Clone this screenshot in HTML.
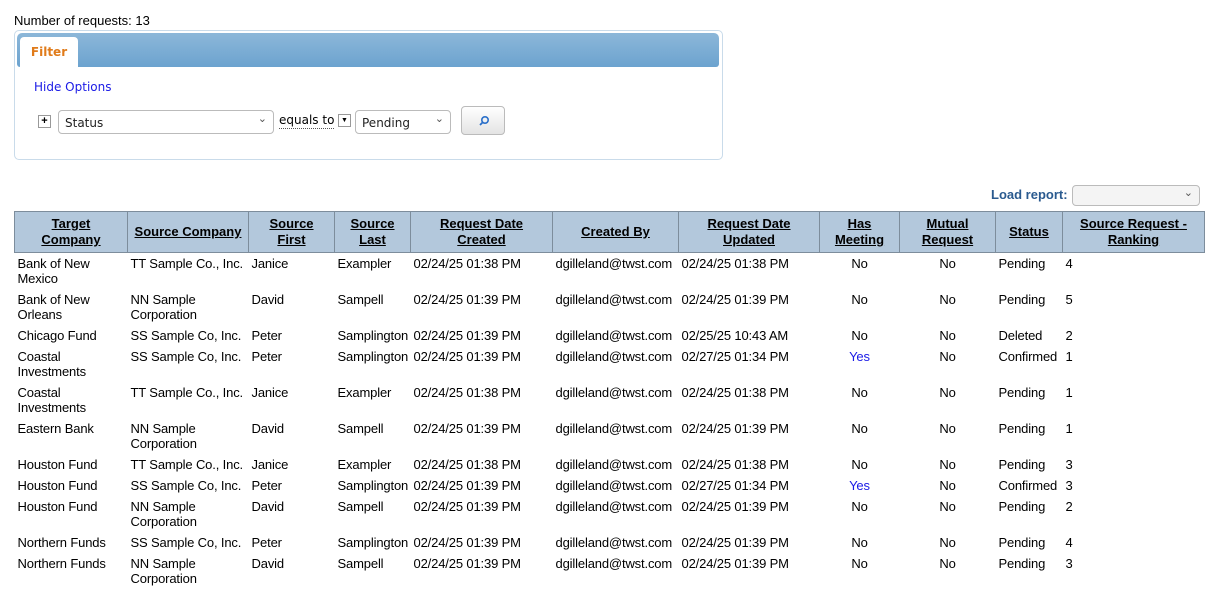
<!DOCTYPE html>
<html><head><style>
body{margin:0;background:#fff;font-family:"Liberation Sans",Arial,sans-serif;font-size:13px;color:#000;position:relative;width:1220px;height:588px;overflow:hidden}
.abs{position:absolute}
.fbox{left:14px;top:30px;width:707px;height:128px;border:1px solid #c9dbea;border-radius:5px}
.band{left:17px;top:33px;width:702px;height:34px;border-radius:5px 5px 3px 3px;background:linear-gradient(#8cb7d9,#6ca3cf);}
.tab{left:20px;top:37px;width:58px;height:30px;background:#fff;border-radius:4px 4px 0 0;color:#e07b1a;font-weight:bold;font-family:"DejaVu Sans",sans-serif;font-size:12px;text-align:center;line-height:31px}
.sel{border:1px solid #bbb;border-radius:4px;background:#fff;height:22px;font-family:"DejaVu Sans",sans-serif;font-size:12px;line-height:22px;padding-left:6px;box-sizing:border-box;color:#222}
.sel:after{content:"⌄";position:absolute;right:6px;top:-4px;font-size:11px;color:#555}
table{position:absolute;left:14px;top:211px;border-collapse:collapse;width:1190px;table-layout:fixed}
th{background:#b3c8dc;border:1px solid #7d8d9c;font-weight:bold;text-decoration:underline;font-size:13px;line-height:16px;padding:4px 2px;text-align:center}
td{vertical-align:top;line-height:15px;padding:3px 3px;font-size:13px;white-space:nowrap;overflow:visible;letter-spacing:-0.15px}
td.c{text-align:center}
.y{color:#1a1ae6}
</style></head><body>
<div class="abs" style="left:14px;top:13px">Number of requests: 13</div>
<div class="abs fbox"></div>
<div class="abs band"></div>
<div class="abs tab">Filter</div>
<div class="abs" style="left:34px;top:80px;color:#1a1ae6;font-family:'DejaVu Sans',sans-serif;font-size:12px">Hide Options</div>
<div class="abs" style="left:38px;top:115px;width:11px;height:11px;border:1px solid #999;font-size:11px;line-height:11px;text-align:center;font-weight:bold">+</div>
<div class="abs sel" style="left:58px;top:110px;width:216px;height:24px;line-height:24px">Status</div>
<div class="abs" style="left:279px;top:113px;font-family:'DejaVu Sans',sans-serif;font-size:12px;border-bottom:1px dotted #555;line-height:15px">equals to</div>
<div class="abs" style="left:338px;top:114px;width:11px;height:11px;border:1px solid #999;font-size:7px;line-height:11px;text-align:center">▼</div>
<div class="abs sel" style="left:355px;top:110px;width:96px;height:24px;line-height:24px">Pending</div>
<div class="abs" style="left:461px;top:106px;width:44px;height:29px;border:1px solid #bbb;border-radius:4px;background:linear-gradient(#fff,#e4e4e4);box-sizing:border-box">
<svg width="44" height="29" style="position:absolute;left:-1px;top:-1px"><circle cx="24" cy="14" r="3.2" fill="none" stroke="#2a6fc9" stroke-width="1.6"/><line x1="21.5" y1="16.5" x2="19" y2="19" stroke="#2a6fc9" stroke-width="1.8"/></svg></div>
<div class="abs" style="left:991px;top:187px;color:#2a5a8f;font-weight:bold;font-size:13px">Load report:</div>
<div class="abs sel" style="left:1072px;top:185px;width:128px;height:21px;background:#f4f4f4"></div>
<table>
<colgroup><col style="width:113px"><col style="width:121px"><col style="width:86px"><col style="width:76px"><col style="width:142px"><col style="width:126px"><col style="width:141px"><col style="width:80px"><col style="width:96px"><col style="width:67px"><col style="width:142px"></colgroup>
<tr><th>Target<br>Company</th><th>Source Company</th><th>Source<br>First</th><th>Source<br>Last</th><th>Request Date<br>Created</th><th>Created By</th><th>Request Date<br>Updated</th><th>Has<br>Meeting</th><th>Mutual<br>Request</th><th>Status</th><th>Source Request -<br>Ranking</th></tr>
<tr><td>Bank of New<br>Mexico</td><td>TT Sample Co., Inc.</td><td>Janice</td><td>Exampler</td><td>02/24/25 01:38 PM</td><td>dgilleland@twst.com</td><td>02/24/25 01:38 PM</td><td class="c">No</td><td class="c">No</td><td>Pending</td><td>4</td></tr>
<tr><td>Bank of New<br>Orleans</td><td>NN Sample<br>Corporation</td><td>David</td><td>Sampell</td><td>02/24/25 01:39 PM</td><td>dgilleland@twst.com</td><td>02/24/25 01:39 PM</td><td class="c">No</td><td class="c">No</td><td>Pending</td><td>5</td></tr>
<tr><td>Chicago Fund</td><td>SS Sample Co, Inc.</td><td>Peter</td><td>Samplington</td><td>02/24/25 01:39 PM</td><td>dgilleland@twst.com</td><td>02/25/25 10:43 AM</td><td class="c">No</td><td class="c">No</td><td>Deleted</td><td>2</td></tr>
<tr><td>Coastal<br>Investments</td><td>SS Sample Co, Inc.</td><td>Peter</td><td>Samplington</td><td>02/24/25 01:39 PM</td><td>dgilleland@twst.com</td><td>02/27/25 01:34 PM</td><td class="c y">Yes</td><td class="c">No</td><td>Confirmed</td><td>1</td></tr>
<tr><td>Coastal<br>Investments</td><td>TT Sample Co., Inc.</td><td>Janice</td><td>Exampler</td><td>02/24/25 01:38 PM</td><td>dgilleland@twst.com</td><td>02/24/25 01:38 PM</td><td class="c">No</td><td class="c">No</td><td>Pending</td><td>1</td></tr>
<tr><td>Eastern Bank</td><td>NN Sample<br>Corporation</td><td>David</td><td>Sampell</td><td>02/24/25 01:39 PM</td><td>dgilleland@twst.com</td><td>02/24/25 01:39 PM</td><td class="c">No</td><td class="c">No</td><td>Pending</td><td>1</td></tr>
<tr><td>Houston Fund</td><td>TT Sample Co., Inc.</td><td>Janice</td><td>Exampler</td><td>02/24/25 01:38 PM</td><td>dgilleland@twst.com</td><td>02/24/25 01:38 PM</td><td class="c">No</td><td class="c">No</td><td>Pending</td><td>3</td></tr>
<tr><td>Houston Fund</td><td>SS Sample Co, Inc.</td><td>Peter</td><td>Samplington</td><td>02/24/25 01:39 PM</td><td>dgilleland@twst.com</td><td>02/27/25 01:34 PM</td><td class="c y">Yes</td><td class="c">No</td><td>Confirmed</td><td>3</td></tr>
<tr><td>Houston Fund</td><td>NN Sample<br>Corporation</td><td>David</td><td>Sampell</td><td>02/24/25 01:39 PM</td><td>dgilleland@twst.com</td><td>02/24/25 01:39 PM</td><td class="c">No</td><td class="c">No</td><td>Pending</td><td>2</td></tr>
<tr><td>Northern Funds</td><td>SS Sample Co, Inc.</td><td>Peter</td><td>Samplington</td><td>02/24/25 01:39 PM</td><td>dgilleland@twst.com</td><td>02/24/25 01:39 PM</td><td class="c">No</td><td class="c">No</td><td>Pending</td><td>4</td></tr>
<tr><td>Northern Funds</td><td>NN Sample<br>Corporation</td><td>David</td><td>Sampell</td><td>02/24/25 01:39 PM</td><td>dgilleland@twst.com</td><td>02/24/25 01:39 PM</td><td class="c">No</td><td class="c">No</td><td>Pending</td><td>3</td></tr>
</table>
</body></html>
